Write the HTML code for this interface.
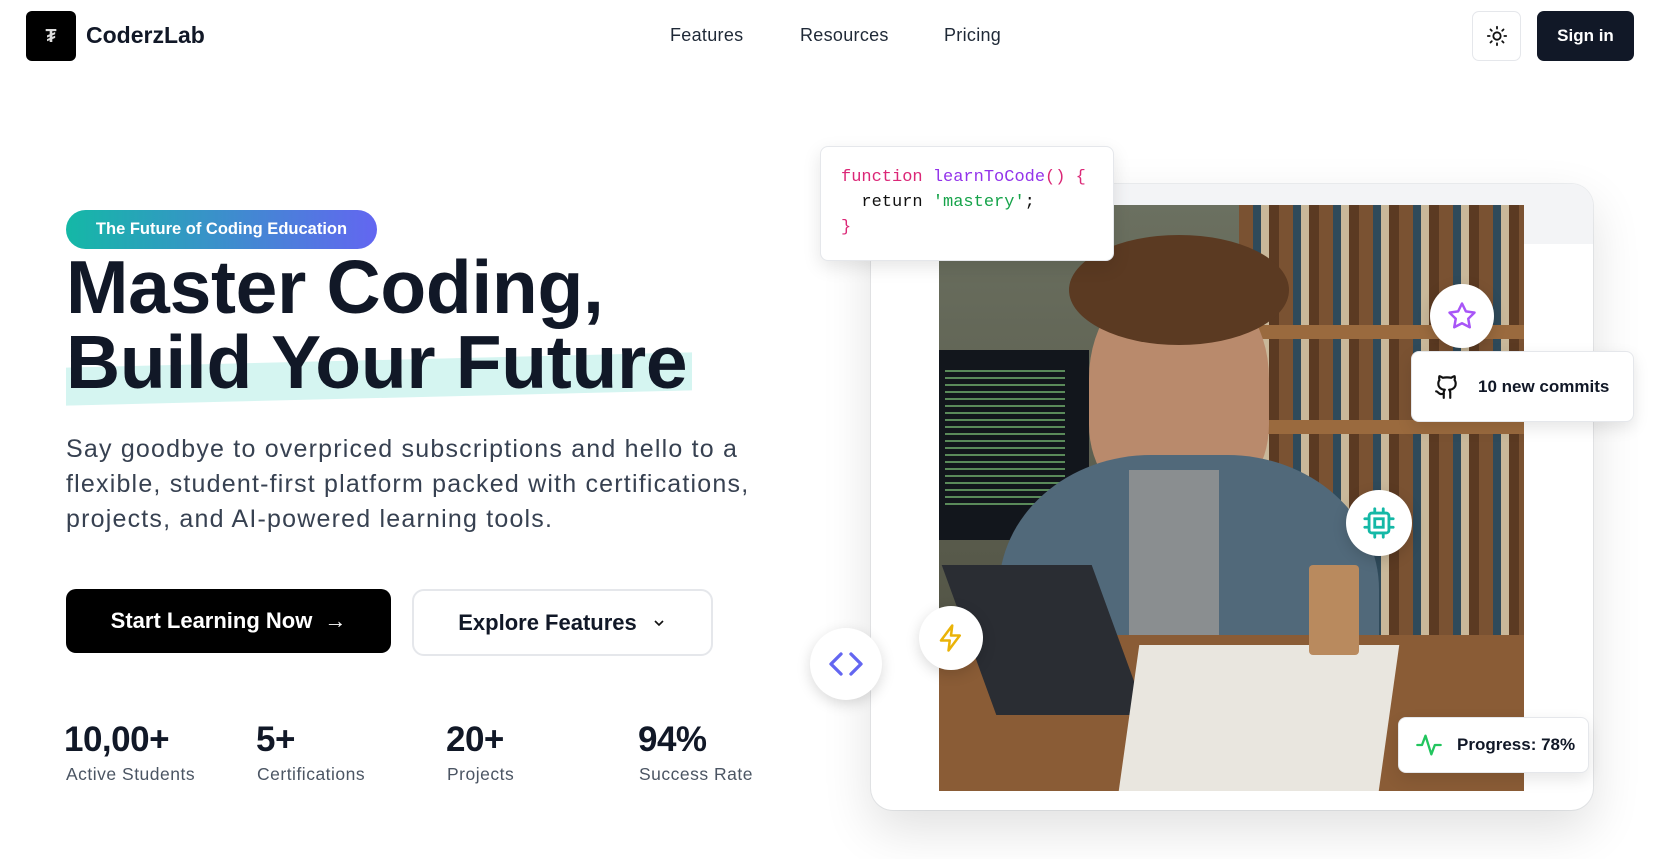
<!DOCTYPE html>
<html><head><meta charset="utf-8"><style>
*{box-sizing:border-box;margin:0;padding:0}
body{width:1670px;height:859px;overflow:hidden;background:#fff;font-family:"Liberation Sans",sans-serif;color:#111827;position:relative}
.abs{position:absolute}
.logo{left:26px;top:11px;width:50px;height:50px;background:#000;border-radius:6px;color:#ddd;font-size:18px;font-weight:bold;display:flex;align-items:center;justify-content:center}
.brand{left:86px;top:22px;font-size:23px;font-weight:bold;letter-spacing:0px}
.nav{top:25px;font-size:18px;color:#1f2937;letter-spacing:0.3px}
.theme{left:1472px;top:11px;width:49px;height:50px;border:1px solid #e5e7eb;border-radius:7px;display:flex;align-items:center;justify-content:center}
.sign{left:1537px;top:11px;width:97px;height:50px;background:#111827;border-radius:7px;color:#fff;font-size:17px;font-weight:bold;display:flex;align-items:center;justify-content:center}
.badge{left:66px;top:210px;width:311px;height:39px;border-radius:20px;background:linear-gradient(90deg,#14b8a6,#6366f1);color:#fff;font-size:16.5px;font-weight:bold;display:flex;align-items:center;justify-content:center}
h1{position:absolute;left:66px;top:250px;font-size:75px;line-height:75px;font-weight:bold;letter-spacing:-0.3px;color:#111827;white-space:nowrap}
.hl{left:66px;top:360px;width:626px;height:38px;background:#d5f5f1;transform:skewY(-1.4deg);}
p.lead{position:absolute;left:66px;top:432px;font-size:25px;line-height:35px;color:#374151;white-space:nowrap;letter-spacing:1.2px}
.b1{left:66px;top:589px;width:325px;height:64px;background:#000;border-radius:10px;color:#fff;font-size:22px;font-weight:bold;display:flex;align-items:center;justify-content:center;gap:12px}
.b2{left:412px;top:589px;width:301px;height:67px;border:2px solid #e5e7eb;border-radius:12px;color:#111827;font-size:22px;font-weight:bold;display:flex;align-items:center;justify-content:center;gap:14px}
.num{top:720px;font-size:35px;font-weight:bold;letter-spacing:-0.5px}
.lab{top:764px;font-size:17.5px;color:#4b5563;letter-spacing:0.5px}
.card{left:871px;top:184px;width:722px;height:626px;background:#fff;border-radius:22px;box-shadow:0 20px 50px rgba(0,0,0,.12),0 0 0 1px #eef0f2;overflow:hidden}
.photo{left:939px;top:205px;width:585px;height:586px;overflow:hidden;background:#5a3d25}
.code{left:820px;top:146px;width:294px;height:115px;background:#fff;border:1px solid #e5e7eb;border-radius:8px;box-shadow:0 6px 18px rgba(0,0,0,.1);font-family:"Liberation Mono",monospace;font-size:17px;line-height:25px;padding:18px 20px;white-space:pre}
.circ{background:#fff;border-radius:50%;box-shadow:0 4px 14px rgba(0,0,0,.15);display:flex;align-items:center;justify-content:center}
.pill{background:#fff;border:1px solid #e5e7eb;border-radius:8px;box-shadow:0 6px 16px rgba(0,0,0,.1);display:flex;align-items:center;font-size:17px;font-weight:bold;color:#111827}
</style></head><body>
<div class="abs logo">₮</div>
<div class="abs brand">CoderzLab</div>
<div class="abs nav" style="left:670px">Features</div>
<div class="abs nav" style="left:800px">Resources</div>
<div class="abs nav" style="left:944px">Pricing</div>
<div class="abs theme"><svg width="22" height="22" viewBox="0 0 24 24" fill="none" stroke="#111" stroke-width="2" stroke-linecap="round"><circle cx="12" cy="12" r="4"/><path d="M12 2v2M12 20v2M4.9 4.9l1.4 1.4M17.7 17.7l1.4 1.4M2 12h2M20 12h2M4.9 19.1l1.4-1.4M17.7 6.3l1.4-1.4"/></svg></div>
<div class="abs sign">Sign in</div>

<div class="abs badge">The Future of Coding Education</div>
<div class="abs hl"></div>
<h1>Master Coding,<br>Build Your Future</h1>
<p class="lead">Say goodbye to overpriced subscriptions and hello to a<br>flexible, student-first platform packed with certifications,<br>projects, and AI-powered learning tools.</p>
<div class="abs b1">Start Learning Now <span style="font-size:22px">→</span></div>
<div class="abs b2">Explore Features <svg width="16" height="16" viewBox="0 0 24 24" fill="none" stroke="#111" stroke-width="2.5"><path d="M6 9l6 6 6-6"/></svg></div>
<div class="abs num" style="left:64px">10,00+</div><div class="abs lab" style="left:66px">Active Students</div>
<div class="abs num" style="left:256px">5+</div><div class="abs lab" style="left:257px">Certifications</div>
<div class="abs num" style="left:446px">20+</div><div class="abs lab" style="left:447px">Projects</div>
<div class="abs num" style="left:638px">94%</div><div class="abs lab" style="left:639px">Success Rate</div>

<div class="abs card"><div style="position:absolute;left:0;top:0;width:100%;height:60px;background:#f3f4f6"></div></div>
<div class="abs photo">
 <div class="abs" style="left:300px;top:0;width:285px;height:586px;background:repeating-linear-gradient(90deg,#7a5232 0 14px,#2f4a5a 14px 22px,#c9b89a 22px 30px,#5b3a22 30px 40px)"></div>
 <div class="abs" style="left:300px;top:120px;width:285px;height:14px;background:#9a6a3e"></div>
 <div class="abs" style="left:300px;top:215px;width:285px;height:14px;background:#9a6a3e"></div>
 <div class="abs" style="left:0;top:0;width:300px;height:586px;background:linear-gradient(180deg,#6b7060,#4a4a3c)"></div>
 <div class="abs" style="left:0;top:145px;width:150px;height:190px;background:#12161c"></div>
 <div class="abs" style="left:6px;top:165px;width:120px;height:140px;background:repeating-linear-gradient(180deg,#5a8a5a 0 2px,#12161c 2px 7px)"></div>
 <div class="abs" style="left:150px;top:70px;width:180px;height:230px;border-radius:45% 45% 35% 35%;background:#b98a6c"></div>
 <div class="abs" style="left:130px;top:30px;width:220px;height:110px;border-radius:50%;background:#5b3a22"></div>
 <div class="abs" style="left:60px;top:250px;width:380px;height:336px;border-radius:40% 40% 0 0;background:#51697a"></div>
 <div class="abs" style="left:190px;top:265px;width:90px;height:200px;background:#8a8e90"></div>
 <div class="abs" style="left:0;top:430px;width:585px;height:156px;background:#8a5c36"></div>
 <div class="abs" style="left:30px;top:360px;width:150px;height:150px;background:#2a2d33;transform:skewX(20deg)"></div>
 <div class="abs" style="left:190px;top:440px;width:260px;height:146px;background:#e9e6df;transform:skewX(-8deg)"></div>
 <div class="abs" style="left:370px;top:360px;width:50px;height:90px;background:#b98a5e;border-radius:4px"></div>
</div>
<div class="abs code"><span style="color:#db2777">function</span> <span style="color:#9333ea">learnToCode</span><span style="color:#db2777">() {</span>
  <span style="color:#111">return</span> <span style="color:#16a34a">'mastery'</span><span style="color:#111">;</span>
<span style="color:#db2777">}</span></div>
<div class="abs circ" style="left:1430px;top:284px;width:64px;height:64px"><svg width="30" height="30" viewBox="0 0 24 24" fill="none" stroke="#a855f7" stroke-width="2" stroke-linejoin="round"><path d="M12 2l3.1 6.3 6.9 1-5 4.9 1.2 6.8L12 17.8 5.8 21l1.2-6.8-5-4.9 6.9-1z"/></svg></div>
<div class="abs pill" style="left:1411px;top:351px;width:223px;height:71px;padding-left:22px;gap:18px"><svg width="26" height="26" viewBox="0 0 24 24" fill="none" stroke="#111" stroke-width="2" stroke-linecap="round" stroke-linejoin="round"><path d="M15 22v-4a4.8 4.8 0 0 0-1-3.5c3 0 6-2 6-5.5.1-1.3-.3-2.5-1-3.5.3-1.200.3-2.400 0-3.5 0 0-1 0-3 1.5-2.6-.5-5.4-.5-8 0C6 2 5 2 5 2c-.3 1.2-.3 2.4 0 3.5A5.4 5.4 0 0 0 4 9c0 3.5 3 5.5 6 5.5-.4.5-.7 1-.8 1.6-.2.6-.3 1.3-.2 1.900v4"/><path d="M9 18c-4.5 2-5-2-7-2"/></svg>10 new commits</div>
<div class="abs circ" style="left:1346px;top:490px;width:66px;height:66px"><svg width="34" height="34" viewBox="0 0 24 24" fill="none" stroke="#14b8a6" stroke-width="2" stroke-linecap="round"><rect x="5" y="5" width="14" height="14" rx="2"/><rect x="9" y="9" width="6" height="6"/><path d="M9 2v3M15 2v3M9 19v3M15 19v3M2 9h3M2 15h3M19 9h3M19 15h3"/></svg></div>
<div class="abs circ" style="left:919px;top:606px;width:64px;height:64px"><svg width="30" height="30" viewBox="0 0 24 24" fill="none" stroke="#eab308" stroke-width="2" stroke-linejoin="round"><path d="M13 2L4 14h7l-1 8 9-12h-7z"/></svg></div>
<div class="abs circ" style="left:810px;top:628px;width:72px;height:72px"><svg width="40" height="40" viewBox="0 0 24 24" fill="none" stroke="#6366f1" stroke-width="2" stroke-linecap="round" stroke-linejoin="round"><path d="M9 6l-6 6 6 6M15 6l6 6-6 6"/></svg></div>
<div class="abs pill" style="left:1398px;top:717px;width:191px;height:56px;padding-left:16px;gap:14px"><svg width="28" height="28" viewBox="0 0 24 24" fill="none" stroke="#22c55e" stroke-width="2" stroke-linecap="round" stroke-linejoin="round"><path d="M2 12h4l3-8 5 16 3-8h5"/></svg>Progress: 78%</div>
</body></html>
